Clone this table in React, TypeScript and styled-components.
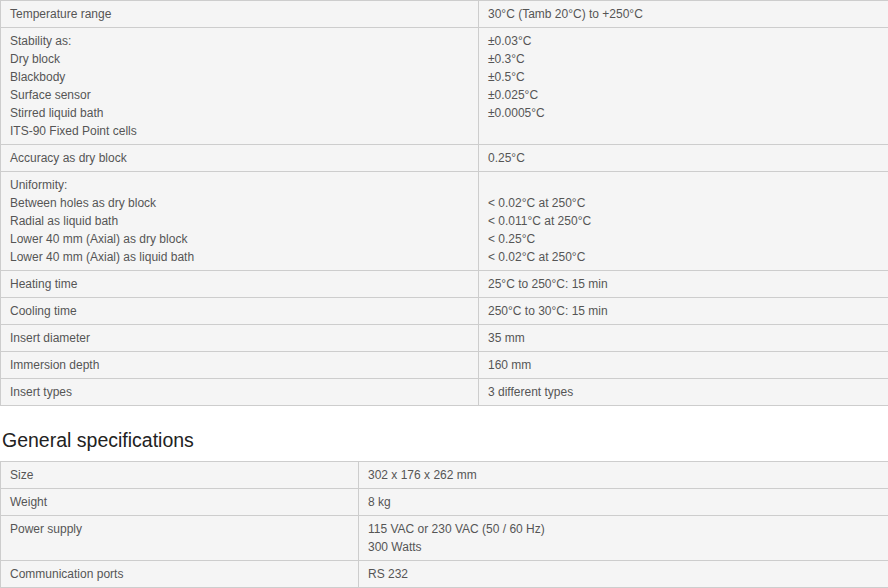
import styled, { createGlobalStyle } from "styled-components";

const GlobalStyle = createGlobalStyle`
  html, body {
    margin: 0;
    padding: 0;
    background: #fff;
    font-family: "Liberation Sans", Arial, sans-serif;
  }
`;

const Page = styled.div`
  width: 888px;
  overflow: hidden;
`;

const SpecTable = styled.table`
  width: 1000px;
  border-collapse: collapse;
  table-layout: fixed;
  background: #f5f5f5;
  font-size: 12px;
  line-height: 18px;
  color: #555;
`;

const Cell = styled.td`
  border: 1px solid #cdcdcd;
  padding: 4px 9px;
  vertical-align: top;
`;

const Heading = styled.h2`
  margin: 22px 0 9px 2px;
  font-size: 19.5px;
  line-height: 24px;
  font-weight: normal;
  color: #222;
`;

type Row = [string[], string[]];

const performance: Row[] = [
  [["Temperature range"], ["30°C (Tamb 20°C) to +250°C"]],
  [
    [
      "Stability as:",
      "Dry block",
      "Blackbody",
      "Surface sensor",
      "Stirred liquid bath",
      "ITS-90 Fixed Point cells",
    ],
    ["±0.03°C", "±0.3°C", "±0.5°C", "±0.025°C", "±0.0005°C"],
  ],
  [["Accuracy as dry block"], ["0.25°C"]],
  [
    [
      "Uniformity:",
      "Between holes as dry block",
      "Radial as liquid bath",
      "Lower 40 mm (Axial) as dry block",
      "Lower 40 mm (Axial) as liquid bath",
    ],
    ["", "< 0.02°C at 250°C", "< 0.011°C at 250°C", "< 0.25°C", "< 0.02°C at 250°C"],
  ],
  [["Heating time"], ["25°C to 250°C: 15 min"]],
  [["Cooling time"], ["250°C to 30°C: 15 min"]],
  [["Insert diameter"], ["35 mm"]],
  [["Immersion depth"], ["160 mm"]],
  [["Insert types"], ["3 different types"]],
];

const general: Row[] = [
  [["Size"], ["302 x 176 x 262 mm"]],
  [["Weight"], ["8 kg"]],
  [["Power supply"], ["115 VAC or 230 VAC (50 / 60 Hz)", "300 Watts"]],
  [["Communication ports"], ["RS 232"]],
];

function Lines({ lines }: { lines: string[] }) {
  return (
    <>
      {lines.map((l, i) => (
        <div key={i}>{l || "\u00a0"}</div>
      ))}
    </>
  );
}

function Table({ rows, firstCol }: { rows: Row[]; firstCol: number }) {
  return (
    <SpecTable>
      <colgroup>
        <col style={{ width: firstCol }} />
        <col />
      </colgroup>
      <tbody>
        {rows.map(([label, value], i) => (
          <tr key={i}>
            <Cell>
              <Lines lines={label} />
            </Cell>
            <Cell>
              <Lines lines={value} />
            </Cell>
          </tr>
        ))}
      </tbody>
    </SpecTable>
  );
}

export default function App() {
  return (
    <Page>
      <GlobalStyle />
      <Table rows={performance} firstCol={478} />
      <Heading>General specifications</Heading>
      <Table rows={general} firstCol={358} />
    </Page>
  );
}
